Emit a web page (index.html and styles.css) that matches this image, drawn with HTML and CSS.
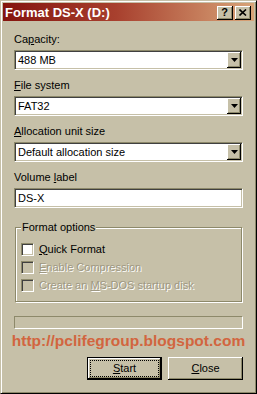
FILE: index.html
```html
<!DOCTYPE html>
<html lang="en">
<head>
    <meta charset="UTF-8">
    <title>Format DS-X (D:)</title>
    <link rel="stylesheet" href="styles.css">
</head>
<body>
    <div class="window">
        <div class="titlebar">
            <span class="title">Format DS-X (D:)</span>
            <div class="title-buttons">
                <span class="tbtn">?</span>
                <span class="tbtn">
                    <svg width="8" height="7" viewBox="0 0 8 7"><path d="M0.5 0.5 L7 6.5 M7 0.5 L0.5 6.5" stroke="#000" stroke-width="1.6"/></svg>
                </span>
            </div>
        </div>
        <div class="content">
            <div class="field-label">Ca<u>p</u>acity:</div>
            <div class="combo">
                <span class="combo-text">488 MB</span>
                <span class="drop"><svg width="7" height="4" viewBox="0 0 7 4"><path d="M0 0 H7 L3.5 4 Z" fill="#000"/></svg></span>
            </div>

            <div class="field-label"><u>F</u>ile system</div>
            <div class="combo">
                <span class="combo-text">FAT32</span>
                <span class="drop"><svg width="7" height="4" viewBox="0 0 7 4"><path d="M0 0 H7 L3.5 4 Z" fill="#000"/></svg></span>
            </div>

            <div class="field-label"><u>A</u>llocation unit size</div>
            <div class="combo">
                <span class="combo-text">Default allocation size</span>
                <span class="drop"><svg width="7" height="4" viewBox="0 0 7 4"><path d="M0 0 H7 L3.5 4 Z" fill="#000"/></svg></span>
            </div>

            <div class="field-label">Volume <u>l</u>abel</div>
            <div class="textbox">DS-X</div>

            <fieldset class="group">
                <legend>Format options</legend>
                <div class="check-row">
                    <span class="checkbox"></span>
                    <span><u>Q</u>uick Format</span>
                </div>
                <div class="check-row disabled">
                    <span class="checkbox"></span>
                    <span><u>E</u>nable Compression</span>
                </div>
                <div class="check-row disabled">
                    <span class="checkbox"></span>
                    <span>Create an <u>M</u>S-DOS startup disk</span>
                </div>
            </fieldset>

            <div class="progress"></div>

            <div class="url">http://pclifegroup.blogspot.com</div>

            <div class="buttons">
                <div class="btn default"><div class="focus"><u>S</u>tart</div></div>
                <div class="btn"><u>C</u>lose</div>
            </div>
        </div>
    </div>
</body>
</html>
```

FILE: styles.css
```css
body {
    margin: 0;
    font-family: "Liberation Sans", Arial, sans-serif;
    font-size: 11px;
    line-height: 13px;
    color: #000;
}
.window {
    width: 257px;
    height: 394px;
    box-sizing: border-box;
    background: #c6c0a8;
    border: 1px solid;
    border-color: #c6c0a8 #000 #000 #c6c0a8;
    box-shadow: inset 1px 1px 0 #fff, inset -1px -1px 0 #8d896a;
    padding: 2px;
}
.titlebar {
    height: 18px;
    display: flex;
    align-items: center;
    justify-content: space-between;
    padding: 0 3px 0 2px;
    background: linear-gradient(to right, #84140e, #a8402e 45%, #d8a478);
}
.title {
    color: #fff;
    font-weight: bold;
    font-size: 13px;
    line-height: 18px;
    padding-top: 1px;
}
.title-buttons {
    display: flex;
    gap: 2px;
    margin-top: 1px;
}
.tbtn {
    width: 16px;
    height: 14px;
    box-sizing: border-box;
    display: flex;
    justify-content: center;
    align-items: center;
    background: #c6c0a8;
    box-shadow: inset -1px -1px 0 #000, inset 1px 1px 0 #fff, inset -2px -2px 0 #8d896a;
    font-weight: bold;
    font-size: 11px;
    padding: 0 1px 1px 0;
}
.content {
    padding: 12px 11px 0 11px;
}
.field-label {
    margin-bottom: 4px;
}
.combo, .textbox {
    height: 20px;
    box-sizing: border-box;
    background: #fff;
    border: 1px solid;
    border-color: #8d896a #fff #fff #8d896a;
    box-shadow: inset 1px 1px 0 #404040, inset -1px -1px 0 #c6c0a8;
    margin-bottom: 9px;
}
.combo {
    display: flex;
    align-items: stretch;
    padding: 1px;
}
.combo-text {
    flex: 1;
    display: flex;
    align-items: center;
    padding-left: 2px;
}
.drop {
    width: 14px;
    display: flex;
    justify-content: center;
    align-items: center;
    background: #c6c0a8;
    box-shadow: inset -1px -1px 0 #000, inset 1px 1px 0 #fff, inset -2px -2px 0 #8d896a;
}
.textbox {
    display: flex;
    align-items: center;
    padding-left: 3px;
    margin-bottom: 0;
}
.group {
    width: 227px;
    box-sizing: border-box;
    margin: 13px 0 0 1px;
    padding: 6px 5px 7px 5px;
    border: 1px solid #8d896a;
    box-shadow: inset 1px 1px 0 #fff, 1px 1px 0 #fff;
    min-width: 0;
}
.group legend {
    padding: 0 1px;
    background: #c6c0a8;
    line-height: 13px;
}
.check-row {
    height: 18px;
    display: flex;
    align-items: center;
    gap: 5px;
}
.checkbox {
    width: 13px;
    height: 13px;
    box-sizing: border-box;
    background: #fff;
    border: 1px solid;
    border-color: #8d896a #fff #fff #8d896a;
    box-shadow: inset 1px 1px 0 #404040, inset -1px -1px 0 #c6c0a8;
}
.check-row.disabled {
    color: #9e9882;
    text-shadow: 1px 1px 0 #fff;
}
.check-row.disabled .checkbox {
    background: #c6c0a8;
}
.progress {
    margin-top: 14px;
    height: 13px;
    box-sizing: border-box;
    border: 1px solid;
    border-color: #8d896a #fff #fff #8d896a;
}
.url {
    margin: 3px -6px 0 -6px;
    text-align: center;
    white-space: nowrap;
    font-weight: bold;
    font-size: 15.5px;
    line-height: 17px;
    color: #d2653f;
}
.buttons {
    display: flex;
    justify-content: flex-end;
    gap: 6px;
    margin-top: 8px;
}
.btn {
    width: 75px;
    height: 23px;
    box-sizing: border-box;
    display: flex;
    justify-content: center;
    align-items: center;
    background: #c6c0a8;
    box-shadow: inset -1px -1px 0 #000, inset 1px 1px 0 #fff, inset -2px -2px 0 #8d896a;
}
.btn.default {
    border: 1px solid #000;
    align-items: stretch;
}
.focus {
    flex: 1;
    margin: 2px;
    border: 1px dotted #000;
    display: flex;
    justify-content: center;
    align-items: center;
}
```
